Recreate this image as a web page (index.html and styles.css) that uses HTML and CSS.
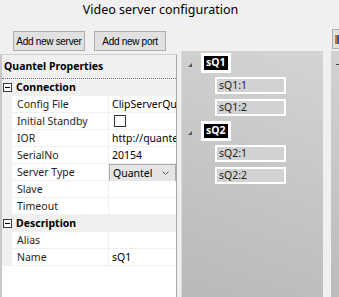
FILE: index.html
```html
<!DOCTYPE html>
<html>
<head>
<meta charset="utf-8">
<link rel="stylesheet" href="styles.css">
</head>
<body>
<div class="title">Video server configuration</div>
<div class="main">
  <div class="left">
    <div class="toolbar">
      <button class="btn btn-server">Add new server</button>
      <button class="btn btn-port">Add new port</button>
    </div>
    <div class="props">
      <div class="props-head">Quantel Properties</div>
      <div class="grid">
        <div class="cat"><span class="minus"></span>Connection</div>
        <div class="row"><div class="strip"></div><div class="name">Config File</div><div class="val">ClipServerQua</div></div>
        <div class="row"><div class="strip"></div><div class="name">Initial Standby</div><div class="val"><span class="check"></span></div></div>
        <div class="row"><div class="strip"></div><div class="name">IOR</div><div class="val">http://quantel:</div></div>
        <div class="row"><div class="strip"></div><div class="name">SerialNo</div><div class="val">20154</div></div>
        <div class="row"><div class="strip"></div><div class="name">Server Type</div><div class="val val-combo"><div class="combo">Quantel<svg class="chev" width="7" height="4" viewBox="0 0 7 4"><path d="M0.5 0.5 L3.5 3.5 L6.5 0.5" fill="none" stroke="#606060" stroke-width="1"/></svg></div></div></div>
        <div class="row"><div class="strip"></div><div class="name">Slave</div><div class="val"></div></div>
        <div class="row"><div class="strip"></div><div class="name">Timeout</div><div class="val"></div></div>
        <div class="cat"><span class="minus"></span>Description</div>
        <div class="row"><div class="strip"></div><div class="name">Alias</div><div class="val"></div></div>
        <div class="row"><div class="strip"></div><div class="name">Name</div><div class="val">sQ1</div></div>
      </div>
    </div>
  </div>
  <div class="mid">
    <div class="tree">
      <div class="node">
        <span class="tri"></span>
        <span class="srv"><span class="srv-in">sQ1</span></span>
      </div>
      <div class="port">sQ1:1</div>
      <div class="port">sQ1:2</div>
      <div class="node">
        <span class="tri"></span>
        <span class="srv"><span class="srv-in">sQ2</span></span>
      </div>
      <div class="port">sQ2:1</div>
      <div class="port">sQ2:2</div>
    </div>
  </div>
  <div class="right">
    <div class="rbtn"><span class="ricon"></span></div>
    <div class="rpanel"><span class="rdash"></span></div>
  </div>
</div>
</body>
</html>
```

FILE: styles.css
```css
html, body {
  margin: 0;
  padding: 0;
  width: 339px;
  height: 297px;
  overflow: hidden;
  background: #f0f0f0;
  font-family: "Noto Sans", "Open Sans", sans-serif;
  color: #000;
}

.title {
  height: 29px;
  box-sizing: border-box;
  padding-top: 1px;
  padding-right: 18px;
  text-align: center;
  font-size: 12.5px;
  line-height: 18px;
}

.main {
  display: flex;
  height: 268px;
}

.left {
  width: 177px;
  display: flex;
  flex-direction: column;
}

.toolbar {
  display: flex;
  gap: 9px;
  padding-left: 13px;
  padding-top: 2px;
  height: 19px;
}

.btn {
  margin: 0;
  padding: 0;
  height: 20px;
  box-sizing: border-box;
  border: 1px solid #adadad;
  background: #e1e1e1;
  font-family: "Liberation Sans", Arial, sans-serif;
  font-size: 10px;
  letter-spacing: -0.3px;
  white-space: nowrap;
  color: #000;
}
.btn-server { width: 72px; }
.btn-port { width: 72px; }

.props {
  margin-top: 4px;
  flex: 1;
  background: #fff;
  border: 1px solid #d0d0d0;
  border-left: 2px solid #c8c8c8;
  border-right: 1px solid #a8a8a8;
  border-bottom: none;
  box-sizing: border-box;
  width: 177px;
  overflow: hidden;
}

.props-head {
  height: 24px;
  box-sizing: border-box;
  border-bottom: 1px dotted #6f6f6f;
  background: #f0f0f0;
  font-weight: bold;
  font-size: 10.5px;
  line-height: 23px;
  padding-left: 2px;
}

.grid {
  display: flex;
  flex-direction: column;
  font-size: 10.5px;
}

.cat {
  height: 17px;
  background: #f0f0f0;
  font-weight: bold;
  line-height: 17px;
  display: flex;
  align-items: center;
  gap: 4px;
  padding-left: 1px;
}

.minus {
  width: 7px;
  height: 7px;
  border: 1px solid #3c3c3c;
  background: #fff;
  position: relative;
  flex: none;
}
.minus::after {
  content: "";
  position: absolute;
  left: 1px;
  top: 3px;
  width: 5px;
  height: 1px;
  background: #000;
}

.row {
  display: flex;
  height: 17px;
  line-height: 16px;
}

.strip {
  width: 10px;
  flex: none;
  background: #f0f0f0;
}

.name {
  width: 97px;
  flex: none;
  box-sizing: border-box;
  padding-left: 5px;
  border-bottom: 1px solid #f0f0f0;
  border-right: 1px solid #f0f0f0;
  color: #1e1e1e;
  white-space: nowrap;
  overflow: hidden;
}

.val {
  flex: 1;
  min-width: 0;
  box-sizing: border-box;
  padding-left: 3px;
  border-bottom: 1px solid #f0f0f0;
  white-space: nowrap;
  overflow: hidden;
}

.val-combo {
  padding-left: 0;
  border-bottom: none;
}

.combo {
  height: 18px;
  box-sizing: border-box;
  border: 1px solid #acacac;
  background: #e5e5e5;
  padding-left: 3px;
  line-height: 16px;
  display: flex;
  align-items: center;
  justify-content: space-between;
  padding-right: 6px;
}

.check {
  display: inline-block;
  width: 10px;
  height: 10px;
  border: 1px solid #333;
  background: #fff;
  margin-left: 2px;
  margin-top: 2px;
  vertical-align: top;
}

.mid {
  width: 143px;
  margin-left: 4px;
  padding-top: 22px;
  display: flex;
  flex-direction: column;
}

.tree {
  flex: 1;
  background: linear-gradient(200deg, #d4d4d4 0%, #c6c6c6 50%, #b9b9b9 100%);
  border-left: 1px solid #dcdcdc;
  padding-top: 2px;
  font-size: 10.5px;
}

.node {
  display: flex;
  align-items: center;
  height: 20px;
  margin-bottom: 4px;
}

.tri {
  width: 0;
  height: 0;
  border-left: 4px solid transparent;
  border-bottom: 4px solid #595959;
  margin-left: 6px;
  margin-top: 3px;
}

.srv {
  margin-left: 9px;
  background: #fff;
  padding: 3px;
  display: inline-block;
}
.srv-in {
  display: block;
  background: #000;
  color: #fff;
  font-weight: bold;
  padding: 0 2px;
  line-height: 13px;
  height: 14px;
  font-size: 10.5px;
}

.port {
  margin-left: 33px;
  width: 71px;
  height: 17px;
  box-sizing: border-box;
  border: 2px solid #fff;
  background: #d2d2d2;
  line-height: 13px;
  padding-left: 2px;
  color: #1e1e1e;
  margin-bottom: 5px;
}

.right {
  margin-left: 8px;
  flex: 1;
  display: flex;
  flex-direction: column;
}

.rbtn {
  height: 20px;
  margin-left: 1px;
  border: 1px solid #adadad;
  border-right: none;
  background: #e1e1e1;
  box-sizing: border-box;
  padding: 5px 0 0 2px;
}
.ricon {
  display: block;
  width: 4px;
  height: 9px;
  background: linear-gradient(90deg, #d0762a 50%, #2a5ea8 50%);
}

.rpanel {
  margin-top: 2px;
  flex: 1;
  background: linear-gradient(200deg, #d2d2d2, #bbbbbb);
  position: relative;
}
.rdash {
  position: absolute;
  left: 5px;
  top: 13px;
  width: 3px;
  height: 1px;
  background: #444;
}
```
